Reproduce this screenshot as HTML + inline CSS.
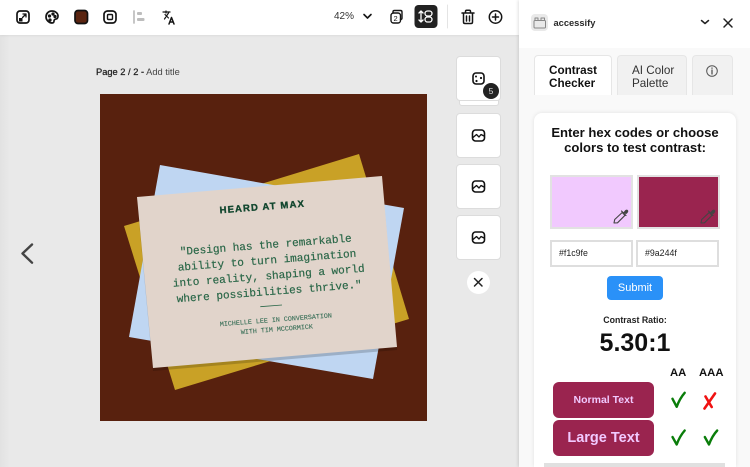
<!DOCTYPE html>
<html><head><meta charset="utf-8">
<style>
*{box-sizing:border-box}
html,body{margin:0;padding:0;width:750px;height:467px;overflow:hidden;background:#e9e9e9;font-family:"Liberation Sans",sans-serif;color:#111}
#root{position:relative;width:750px;height:467px;overflow:hidden}
.a{position:absolute}
.thumb{position:absolute;left:456px;width:45px;height:45px;background:#fff;border:1px solid #dcdcdc;border-radius:4px}
.tab{position:absolute;top:55px;height:40px;background:#f1f1f1;border:1px solid #e6e6e6;border-bottom:0;border-radius:4px 4px 0 0;font-size:12px;line-height:12.5px;padding-top:9px}
.sw{position:absolute;top:175px;height:54px;border:2px solid #e2e2e2}
.inp{position:absolute;top:240px;height:27px;width:83px;background:#fff;border:2px solid #dedede;font-size:8.8px;line-height:23px;padding-left:7px;color:#222}
.btn{position:absolute;left:553px;width:101px;height:36px;background:#9a244f;color:#f1c9fe;border-radius:6px;font-weight:bold;text-align:center}
svg{position:absolute;overflow:visible}
</style></head><body><div id="root">
<div class="a" style="left:0;top:0;width:10px;height:467px;background:linear-gradient(90deg,#e2e2e2,#e9e9e9)"></div>
<div class="a" style="left:0;top:0;width:519px;height:35px;background:#fff;box-shadow:0 0 3px rgba(0,0,0,.1)"></div>

<svg style="left:0;top:0" width="519" height="35" viewBox="0 0 519 35" fill="none" stroke="#151515" stroke-width="1.700" stroke-linecap="round" stroke-linejoin="round">
  <rect x="17" y="11" width="12" height="12" rx="3"/><path d="M22.500 17.500l3.500-3.500M23 14h3v3" stroke-width="1.300"/><rect x="19" y="18" width="3.500" height="3.500" fill="#151515" stroke="none"/>
  <path d="M52 11c-4 0-6 3-6 6s3 6 6 6c2 0 2-1 2-2s1-2 2-2 2-1 2-3c0-3-3-5-6-5z"/>
  <circle cx="49.500" cy="16" r=".8" fill="#151515"/><circle cx="53" cy="14" r=".8" fill="#151515"/><circle cx="50" cy="20" r=".8" fill="#151515"/><circle cx="55" cy="16.500" r=".8" fill="#151515"/>
  <rect x="75" y="10.500" width="12.500" height="13" rx="3" fill="#5a2410" stroke="#111"/>
  <rect x="104" y="11" width="12" height="12" rx="3.500"/><rect x="107.500" y="14.500" width="5" height="5" rx="1" stroke-width="1.400"/>
  <path d="M134 11v12" stroke="#bdbdbd"/><rect x="137" y="12" width="5" height="3" rx="1" fill="#bdbdbd" stroke="none"/><rect x="137" y="18" width="7.500" height="3" rx="1" fill="#bdbdbd" stroke="none"/>
  <path d="M163 12h7M166 11v2M164.500 19l4-6M165 14.500l3.500 3.500" stroke-width="1.200"/><path d="M169 24l2.500-6.500L174 24M170 22h3" stroke-width="1.500"/>
  <path d="M364 14.500l3.500 3.500 3.500-3.500" stroke-width="1.600"/>
  <path d="M393 13v-1.200c0-.9.600-1.300 1.500-1.300h6c1 0 1.500.6 1.500 1.500v6c0 1-.6 1.500-1.500 1.500" stroke-width="1.400"/><rect x="391" y="13" width="9.500" height="10" rx="2.500" stroke-width="1.400"/>
  <rect x="414.500" y="5" width="23" height="23" rx="4" fill="#222" stroke="none"/>
  <g stroke="#fff" stroke-width="1.300"><path d="M421 11v11M419 13l2-2 2 2M419 20l2 2 2-2"/><rect x="425" y="11" width="7" height="5" rx="2.500"/><rect x="425" y="17" width="7" height="5" rx="2.500"/></g>
  <path d="M447.500 5v23" stroke="#e4e4e4" stroke-width="1"/>
  <path d="M462 13h12M465.500 13v-1.500c0-.8.500-1.200 1.200-1.200h2.600c.7 0 1.200.4 1.200 1.200V13M463.500 13v9c0 1 .6 1.500 1.500 1.500h6c1 0 1.500-.5 1.500-1.500v-9M466.500 16v5M469.500 16v5" stroke-width="1.500"/>
  <circle cx="495.500" cy="17" r="6.200" stroke-width="1.500"/><path d="M495.500 14v6M492.500 17h6" stroke-width="1.500"/>
</svg>
<div class="a" style="left:334px;top:11px;font-size:10px;color:#333">42%</div>
<div class="a" style="left:393.500px;top:13.500px;font-size:7.500px;color:#111">2</div>

<div class="a" style="left:96px;top:67px;font-size:9.300px;color:#222"><b style="font-weight:normal;-webkit-text-stroke:.25px #222">Page 2 / 2 -</b> <span style="color:#444">Add title</span></div>

<svg style="left:20px;top:243px" width="16" height="22" fill="none" stroke="#444" stroke-width="2.400" stroke-linecap="round" stroke-linejoin="round"><path d="M12 1.500L2.500 10.500 12 19.700"/></svg>

<!-- Artboard -->
<div class="a" style="left:100px;top:94px;width:327px;height:327px;background:#58210e"></div>
<svg style="left:0;top:0" width="519" height="467" viewBox="0 0 519 467">
  <polygon points="359,154 409,319 175,390 124,226" fill="#c9a126"/>
  <polygon points="160,165 404,208 373,379 129,337" fill="#bfd6f2"/>
  <polygon points="137,197 382,176 397,347 153,368" fill="#000" opacity=".18" transform="translate(0,3)"/>
  <polygon points="137,197 382,176 397,347 153,368" fill="#e1d4cb"/>
  <g text-anchor="middle" fill="#2a6748" font-family="Liberation Mono,monospace" stroke="#2a6748" stroke-width=".2">
    <text transform="translate(262.500 210) rotate(-4.500)" font-family="Liberation Sans,sans-serif" font-weight="bold" font-size="9.500" letter-spacing="1.150" fill="#12472f" stroke="#12472f" stroke-width=".35">HEARD AT MAX</text>
    <text transform="translate(266 248.300) rotate(-4.500)" font-size="11.050">"Design has the remarkable</text>
    <text transform="translate(267.300 263.700) rotate(-4.500)" font-size="11.050">ability to turn imagination</text>
    <text transform="translate(269 279.200) rotate(-4.500)" font-size="11.050">into reality, shaping a world</text>
    <text transform="translate(269.500 295) rotate(-4.500)" font-size="11.050">where possibilities thrive."</text>
    <path d="M260.300 306.700L282 305" stroke-width=".8" fill="none"/>
    <text transform="translate(276 321.800) rotate(-4.500)" font-size="6.700" fill="#3a7059" stroke="#3a7059" stroke-width=".12">MICHELLE LEE IN CONVERSATION</text>
    <text transform="translate(277 331.300) rotate(-4.500)" font-size="6.700" fill="#3a7059" stroke="#3a7059" stroke-width=".12">WITH TIM MCCORMICK</text>
  </g>
</svg>

<!-- Thumbs -->
<div class="a" style="left:459px;top:99px;width:40px;height:7px;background:#fff;border:1px solid #dcdcdc;border-radius:0 0 3px 3px"></div>
<div class="thumb" style="top:56px"></div>
<div class="thumb" style="top:113px"></div>
<div class="thumb" style="top:164px"></div>
<div class="thumb" style="top:215px"></div>
<svg style="left:0;top:0" width="519" height="300" fill="none" stroke="#111" stroke-width="1.600" stroke-linecap="round" stroke-linejoin="round">
  <rect x="473" y="73" width="11" height="11" rx="3"/><circle cx="476" cy="76.500" r="1" fill="#111" stroke="none"/><circle cx="481" cy="78" r="1.100" fill="#111" stroke="none"/><circle cx="476.500" cy="81" r="1.100" fill="#111" stroke="none"/>
  <g><rect x="472.500" y="130" width="12" height="11" rx="3"/><path d="M473 137.500l3.500-3 2.500 2.500 2-2.500 3 1.500" stroke-width="1.300"/></g>
  <g><rect x="472.500" y="181" width="12" height="11" rx="3"/><path d="M473 188.500l3.500-3 2.500 2.500 2-2.500 3 1.500" stroke-width="1.300"/></g>
  <g><rect x="472.500" y="232" width="12" height="11" rx="3"/><path d="M473 239.500l3.500-3 2.500 2.500 2-2.500 3 1.500" stroke-width="1.300"/></g>
</svg>
<div class="a" style="left:483px;top:83px;width:16px;height:16px;border-radius:50%;background:#222;color:#ddd;font-size:8.500px;line-height:16px;text-align:center">5</div>
<div class="a" style="left:467px;top:271px;width:23px;height:23px;border-radius:50%;background:#fff"></div>
<svg style="left:474px;top:278px" width="10" height="10" fill="none" stroke="#222" stroke-width="1.500" stroke-linecap="round"><path d="M.5 .5l7.500 7.500M8 .5L.5 8"/></svg>

<!-- Right panel -->
<div class="a" style="left:519px;top:0;width:231px;height:467px;background:#f9f9f9;box-shadow:-1px 0 3px rgba(0,0,0,.12)"></div>
<div class="a" style="left:519px;top:0;width:231px;height:48px;background:#fff"></div>
<div class="a" style="left:531px;top:14px;width:17px;height:17px;border-radius:4px;background:#e9e9e9"></div>
<svg style="left:0;top:0;" width="750" height="48" fill="none" stroke="#888" stroke-width="1" stroke-linecap="round" stroke-linejoin="round">
  <rect x="534" y="20.500" width="11.500" height="7.500" rx="1"/><path d="M535 20v-2h3v2M541 20v-2h3.500v2"/>
  <path d="M701.500 20.500l3.500 3 3.500-3" stroke="#222" stroke-width="1.500"/>
  <path d="M724 19l8 8M732 19l-8 8" stroke="#222" stroke-width="1.500"/>
</svg>
<div class="a" style="left:553.500px;top:17.500px;font-size:9.300px;font-weight:bold;color:#2a2a2a">accessify</div>

<div class="tab" style="left:534px;width:78px;background:#fff;font-weight:bold;padding-left:14px;font-size:11.700px">Contrast<br>Checker</div>
<div class="tab" style="left:617px;width:70px;padding-left:14px;color:#333;font-size:11.700px">AI Color<br>Palette</div>
<div class="tab" style="left:692px;width:41px"></div>
<svg style="left:692px;top:55px" width="41" height="40" fill="none" stroke="#555" stroke-linecap="round"><circle cx="20" cy="16" r="5.300" stroke-width="1"/><path d="M20 15v4" stroke-width="1.300"/><path d="M20 13v.2" stroke-width="1.300"/></svg>

<div class="a" style="left:534px;top:113px;width:202px;height:354px;background:#fff;border-radius:8px 8px 0 0;box-shadow:0 0 4px rgba(0,0,0,.1)"></div>
<div class="a" style="left:534px;top:125px;width:202px;text-align:center;font-size:13.100px;line-height:15px;font-weight:bold;color:#111">Enter hex codes or choose<br>colors to test contrast:</div>

<div class="sw" style="left:550px;width:83px;background:#f1c9fe"></div>
<div class="sw" style="left:637px;width:83px;background:#9a244f"></div>
<svg style="left:0;top:0" width="750" height="240" fill="none" stroke-linecap="round" stroke-linejoin="round">
  <g stroke="#444" stroke-width="1.100"><path d="M614 223l.7-3.500 7.500-7 2.800 2.800-7.500 7.500z"/><path d="M621.500 211l4.500 4.500M623.500 213l2.500-2.500" stroke-width="1.200"/><path d="M624.500 212.500c.8-2 2-2.700 2.800-2.200s.6 2-1.300 3.200z" fill="#444"/></g>
  <g stroke="#444" stroke-width="1.100"><path d="M701 223l.7-3.500 7.500-7 2.800 2.800-7.500 7.500z"/><path d="M708.500 211l4.500 4.500M710.500 213l2.500-2.500" stroke-width="1.200"/><path d="M711.500 212.500c.8-2 2-2.700 2.800-2.200s.6 2-1.300 3.200z" fill="#444"/></g>
</svg>
<div class="inp" style="left:550px">#f1c9fe</div>
<div class="inp" style="left:636px">#9a244f</div>
<div class="a" style="left:607px;top:276px;width:56px;height:24px;border-radius:4px;background:#2a91f8;color:#fff;font-size:11px;line-height:24px;text-align:center">Submit</div>
<div class="a" style="left:534px;top:315px;width:202px;text-align:center;font-size:8.800px;font-weight:bold;color:#222">Contrast Ratio:</div>
<div class="a" style="left:534px;top:329px;width:202px;text-align:center;font-size:25px;font-weight:bold;color:#111">5.30:1</div>
<div class="a" style="left:670px;top:367px;font-size:11.300px;font-weight:bold;color:#111">AA</div>
<div class="a" style="left:699px;top:367px;font-size:11.300px;font-weight:bold;color:#111">AAA</div>
<div class="btn" style="top:382px;font-size:10.500px;line-height:36px">Normal Text</div>
<div class="btn" style="top:420px;font-size:14.500px;line-height:37px">Large Text</div>
<svg style="left:0;top:0" width="750" height="467" fill="none" stroke-linecap="round" stroke-linejoin="round">
  <path d="M672.500 398.800l4.200 8c2-5.500 4.500-10 8-14" stroke="#0a7d0a" stroke-width="2.400"/>
  <path d="M715 393.500l-10.500 15M705.500 396.500l6.200 10.500" stroke="#f01212" stroke-width="2.600"/>
  <path d="M672.500 437l4.200 7.500c2-5.500 4.500-10 8-14" stroke="#0a7d0a" stroke-width="2.400"/>
  <path d="M704.800 437l4.200 7.500c2-5.500 4.500-10 8.200-14" stroke="#0a7d0a" stroke-width="2.400"/>
</svg>
<div class="a" style="left:544px;top:463px;width:181px;height:4px;background:#e0e0e0"></div>
</div></body></html>
